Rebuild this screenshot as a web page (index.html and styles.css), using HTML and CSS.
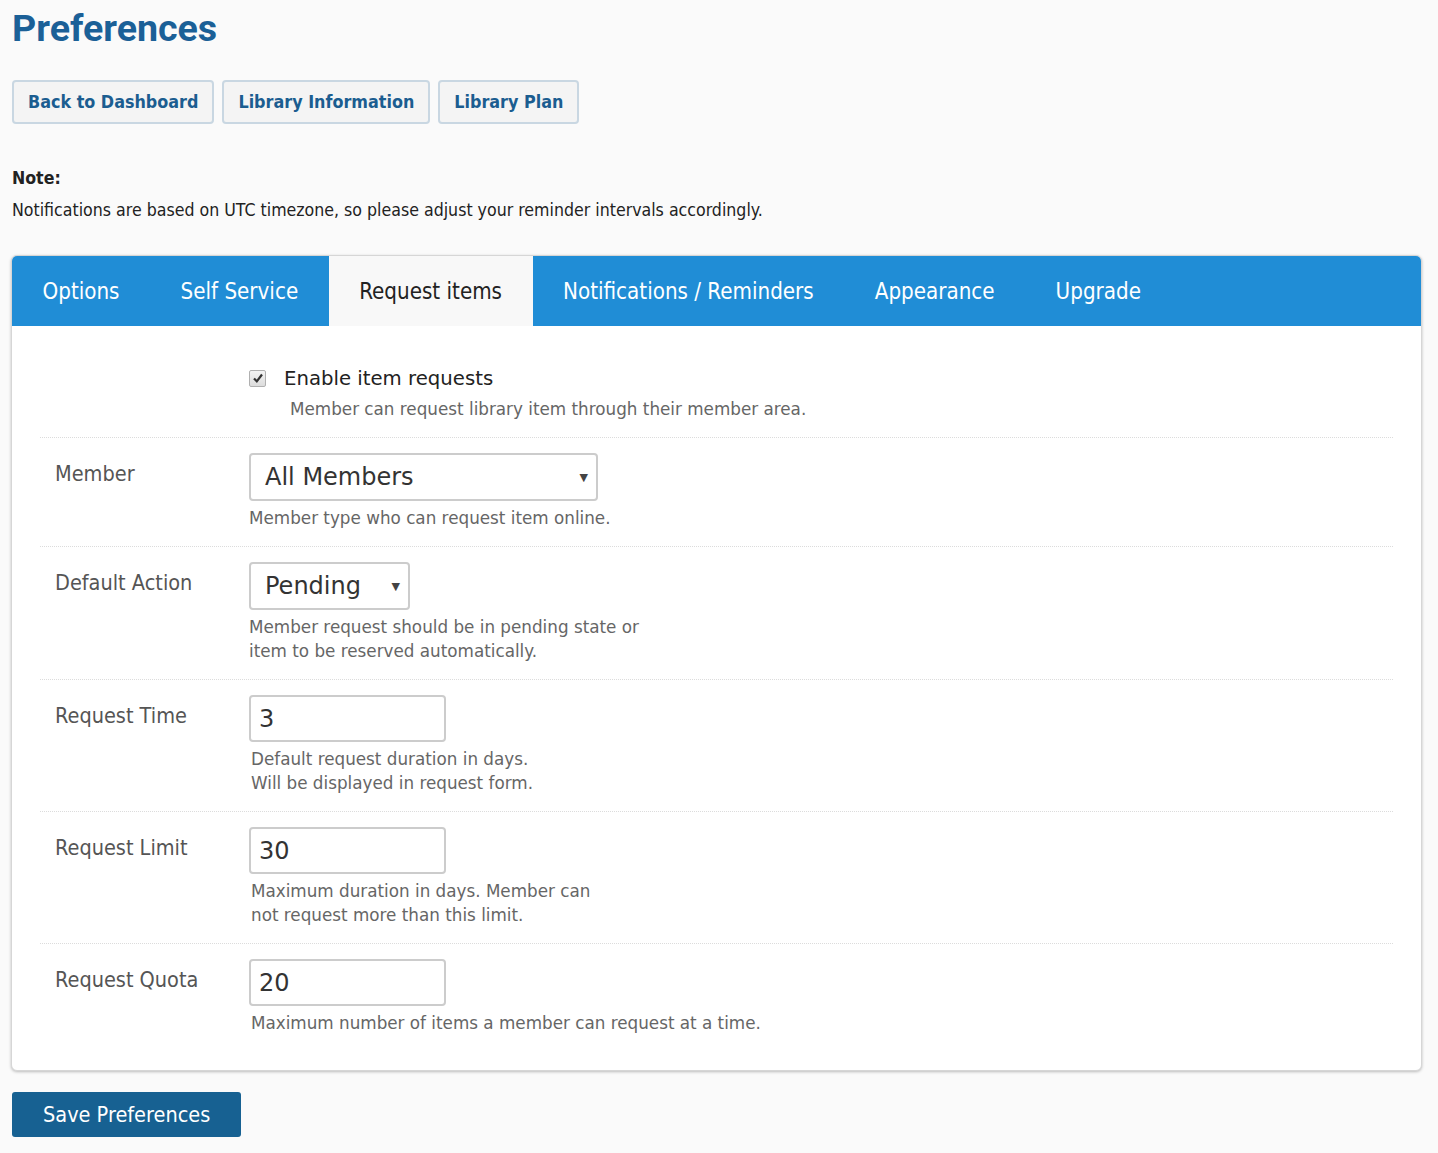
FILE: index.html
```html
<!DOCTYPE html>
<html lang="en">
<head>
    <meta charset="UTF-8">
    <title>Preferences</title>
    <link rel="stylesheet" href="styles.css">
</head>
<body>
    <h1 class="page-title">Preferences</h1>

    <div class="top-links">
        <a class="link-btn" href="#">Back to Dashboard</a>
        <a class="link-btn" href="#">Library Information</a>
        <a class="link-btn" href="#">Library Plan</a>
    </div>

    <div class="note">
        <strong>Note:</strong>
        <p>Notifications are based on UTC timezone, so please adjust your reminder intervals accordingly.</p>
    </div>

    <div class="panel">
        <ul class="tabs">
            <li><a href="#">Options</a></li>
            <li><a href="#">Self Service</a></li>
            <li class="active"><a href="#">Request items</a></li>
            <li><a href="#">Notifications / Reminders</a></li>
            <li><a href="#">Appearance</a></li>
            <li><a href="#">Upgrade</a></li>
        </ul>

        <div class="tab-body">
            <div class="row row-first">
                <div class="row-label"></div>
                <div class="row-field">
                    <label class="check">
                        <span class="check-box">
                            <svg width="12" height="12" viewBox="0 0 12 12"><path d="M2 6.5 L4.8 9.3 L10 2.5" fill="none" stroke="#333" stroke-width="2.2"/></svg>
                        </span>
                        <span>Enable item requests</span>
                    </label>
                    <p class="help help-check">Member can request library item through their member area.</p>
                </div>
            </div>

            <div class="row">
                <div class="row-label">Member</div>
                <div class="row-field">
                    <div class="select select-wide">
                        <span>All Members</span>
                        <span class="caret">&#9660;</span>
                    </div>
                    <p class="help">Member type who can request item online.</p>
                </div>
            </div>

            <div class="row">
                <div class="row-label">Default Action</div>
                <div class="row-field">
                    <div class="select select-short">
                        <span>Pending</span>
                        <span class="caret">&#9660;</span>
                    </div>
                    <p class="help">Member request should be in pending state or<br>item to be reserved automatically.</p>
                </div>
            </div>

            <div class="row">
                <div class="row-label">Request Time</div>
                <div class="row-field">
                    <input class="num-input" type="text" value="3">
                    <p class="help help-input">Default request duration in days.<br>Will be displayed in request form.</p>
                </div>
            </div>

            <div class="row">
                <div class="row-label">Request Limit</div>
                <div class="row-field">
                    <input class="num-input" type="text" value="30">
                    <p class="help help-input">Maximum duration in days. Member can<br>not request more than this limit.</p>
                </div>
            </div>

            <div class="row row-last">
                <div class="row-label">Request Quota</div>
                <div class="row-field">
                    <input class="num-input" type="text" value="20">
                    <p class="help help-input">Maximum number of items a member can request at a time.</p>
                </div>
            </div>
        </div>
    </div>

    <button class="save-btn" type="button">Save Preferences</button>
</body>
</html>
```
FILE: styles.css
```css
body {
    margin: 0;
    padding: 0 16px 16px 12px;
    background-color: #fafafa;
    font-family: "DejaVu Sans Condensed", "DejaVu Sans", sans-serif;
    color: #222;
}

.page-title {
    font-family: Roboto, "Liberation Sans", sans-serif;
    font-size: 37.6px;
    font-weight: 700;
    color: #1b6097;
    margin: 0;
    padding-top: 6px;
    line-height: 44px;
}

.top-links {
    display: flex;
    gap: 8px;
    margin-top: 30px;
}

.link-btn {
    display: inline-block;
    height: 40px;
    line-height: 40px;
    padding: 0 14px;
    background-color: #f4f4f4;
    border: 2px solid #c9d7e2;
    border-radius: 4px;
    font-weight: 700;
    font-size: 17.8px;
    color: #1b5d90;
    text-decoration: none;
}

.note {
    margin-top: 42px;
    font-size: 17.6px;
}

.note strong {
    display: block;
    line-height: 24px;
}

.note p {
    margin: 8px 0 0;
    line-height: 24px;
}

.panel {
    margin-top: 33px;
    margin-left: -1px;
    background-color: #fff;
    border: 1px solid #d6d6d6;
    border-radius: 6px;
    box-shadow: 0 1px 3px rgba(0, 0, 0, 0.25);
    overflow: hidden;
}

.tabs {
    display: flex;
    list-style: none;
    margin: 0;
    padding: 0;
    background-color: #208dd6;
    height: 70px;
}

.tabs li a {
    display: block;
    padding: 0 30.5px;
    line-height: 70px;
    font-size: 22.2px;
    color: #fff;
    text-decoration: none;
}

.tabs li.active {
    background-color: #f8f8f8;
}

.tabs li.active a {
    color: #222;
}

.tab-body {
    padding: 0 28px;
}

.row {
    display: flex;
    padding: 15px 0 16px;
    border-bottom: 1px dotted #dcdcdc;
}

.row-first {
    padding-top: 39px;
}

.row-last {
    border-bottom: none;
    padding-bottom: 35px;
}

.row-label {
    width: 209px;
    padding-left: 15px;
    padding-top: 8px;
    box-sizing: border-box;
    flex-shrink: 0;
    font-size: 21.5px;
    line-height: 26px;
    color: #555;
}

.row-field {
    display: flex;
    flex-direction: column;
    align-items: flex-start;
}

.check {
    display: flex;
    align-items: center;
    height: 26px;
    font-family: "DejaVu Sans", sans-serif;
    font-size: 19.7px;
    color: #222;
}

.check-box {
    display: flex;
    align-items: center;
    justify-content: center;
    width: 15px;
    height: 15px;
    margin-right: 18px;
    border: 1px solid #b0b0b0;
    border-radius: 2px;
    background: linear-gradient(#f4f4f4, #dcdcdc);
}

.help {
    margin: 5px 0 0;
    font-family: "DejaVu Sans", sans-serif;
    font-size: 16.8px;
    line-height: 24px;
    color: #666;
}

.help-check {
    margin-left: 41px;
    margin-top: 6px;
}

.help-input {
    margin-left: 2px;
}

.select {
    display: flex;
    align-items: center;
    justify-content: space-between;
    height: 44px;
    padding: 0 8px 0 14px;
    border: 2px solid #ccc;
    border-radius: 4px;
    background-color: #fff;
    font-family: "DejaVu Sans", sans-serif;
    font-size: 24px;
    color: #333;
    box-sizing: content-box;
}

.select-wide {
    width: 323px;
}

.select-short {
    width: 135px;
}

.caret {
    font-size: 11px;
    color: #444;
}

.num-input {
    width: 177px;
    height: 43px;
    padding: 0 8px;
    margin: 0;
    border: 2px solid #ccc;
    border-radius: 4px;
    font-family: "DejaVu Sans", sans-serif;
    font-size: 24px;
    color: #333;
    background-color: #fff;
    box-sizing: content-box;
}

.save-btn {
    margin-top: 21px;
    height: 45px;
    padding: 0 31px;
    background-color: #176192;
    border: none;
    border-radius: 3px;
    color: #fff;
    font-family: "DejaVu Sans Condensed", "DejaVu Sans", sans-serif;
    font-size: 21.5px;
}
```
